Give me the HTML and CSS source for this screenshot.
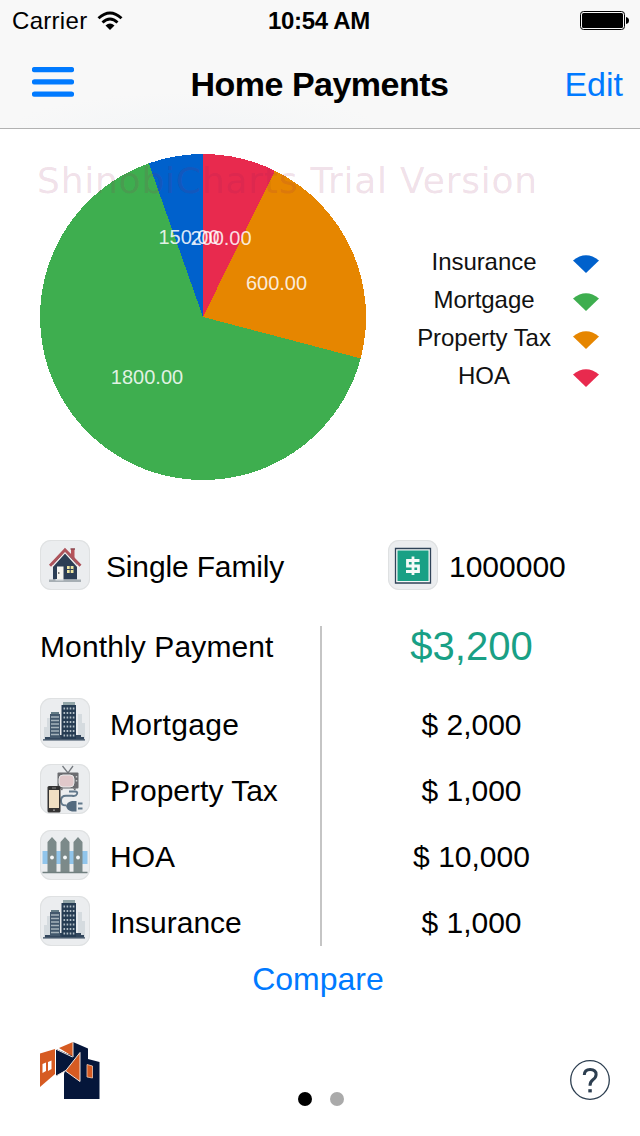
FILE: index.html
```html
<!DOCTYPE html>
<html lang="en">
<head>
<meta charset="utf-8">
<title>Home Payments</title>
<link rel="stylesheet" href="styles.css">
</head>
<body>
<svg width="0" height="0" class="defs">
  <defs>
    <g id="building">
      <path d="M4 41V29h3v-9h5v21zM38 41V16h4v9h3v16z" fill="#d5dbdf"/>
      <path d="M3 41.2h42v1.3H3z" fill="#33475d"/>
      <path d="M5 39h5v-2h12v-3h14v3h5v2h3v2.500H5z" fill="#33475d"/>
      <path d="M11 14h8v2h-8z" fill="#637b85"/>
      <path d="M10 16h10v24H10z" fill="#43586c"/>
      <path d="M11 19h8M11 22.500h8M11 26h8M11 29.500h8M11 33h8M11 36.500h8" stroke="#a5b2ba" stroke-width="1.4"/>
      <path d="M23 4h12v3H23z" fill="#92a5a8"/>
      <path d="M21.500 7h14.500v34H21.500z" fill="#263c53"/>
      <path d="M23.500 10.500h11M23.500 15h11M23.500 19.500h11M23.500 24h11M23.500 28.500h11M23.500 33h11M23.500 37.500h11" stroke="#b1bdc5" stroke-width="2" stroke-dasharray="1.6 1.5"/>
    </g>
  </defs>
</svg>
<div class="screen">
  <header class="header">
    <div class="status">
      <div class="carrier"><span>Carrier</span>
        <svg width="26" height="20" viewBox="0 0 26 20"><g fill="none" stroke="#000" stroke-width="2.900"><path d="M1.500 7.300Q13-3.200 24.500 7.300"/><path d="M5.500 11.500Q13 4.500 20.500 11.500"/></g><path d="M13 19l-4.500-4.500q4.500-4 9 0z"/></svg>
      </div>
      <div class="clock">10:54 AM</div>
      <div class="battery">
        <svg width="50" height="20" viewBox="0 0 50 20"><rect x=".5" y=".5" width="44" height="18" rx="3" fill="none" stroke="#000"/><rect x="2" y="2" width="41" height="15" rx="1.500"/><path d="M46 6q3 .5 3 3.500t-3 3.500z"/></svg>
      </div>
    </div>
    <nav class="nav">
      <svg class="menu" width="42" height="30" viewBox="0 0 42 30"><path d="M2.500 2.600h37M2.500 14.900h37M2.500 27.200h37" stroke="#007aff" stroke-width="5.300" stroke-linecap="round"/></svg>
      <h1 class="title">Home Payments</h1>
      <a class="edit">Edit</a>
    </nav>
  </header>

  <section class="chart">
    <svg class="pie" width="328" height="328" viewBox="39 153 328 328">
      <g shape-rendering="crispEdges">
        <path d="M203 317V154A163 163 0 0 1 274.900 170.700Z" fill="#e82a4e"/>
        <path d="M203 317L274.900 170.700A163 163 0 0 1 360.700 358.400Z" fill="#e68600"/>
        <path d="M203 317L360.700 358.400A163 163 0 1 1 148.800 163.300Z" fill="#3eae4f"/>
        <path d="M203 317L148.800 163.300A163 163 0 0 1 203 154Z" fill="#0061cc"/>
      </g>
      <g class="slice-label">
        <text x="189" y="244">150.00</text>
        <text x="221" y="245">200.00</text>
        <text x="276.500" y="290">600.00</text>
        <text x="147" y="384">1800.00</text>
      </g>
    </svg>
    <ul class="legend">
      <li><span>Insurance</span><svg width="26" height="18" viewBox="0 0 26 18"><path d="M0 5.500Q13-5 26 5.500L13 18z" fill="#0061cc"/></svg></li>
      <li><span>Mortgage</span><svg width="26" height="18" viewBox="0 0 26 18"><path d="M0 5.500Q13-5 26 5.500L13 18z" fill="#3eae4f"/></svg></li>
      <li><span>Property Tax</span><svg width="26" height="18" viewBox="0 0 26 18"><path d="M0 5.500Q13-5 26 5.500L13 18z" fill="#e68600"/></svg></li>
      <li><span>HOA</span><svg width="26" height="18" viewBox="0 0 26 18"><path d="M0 5.500Q13-5 26 5.500L13 18z" fill="#e82a4e"/></svg></li>
    </ul>
    <div class="watermark">ShinobiCharts Trial Version</div>
  </section>

  <section class="summary">
    <div class="type">
      <svg class="tile" viewBox="0 0 50 50">
        <path d="M13 24L25 11l12 13v15.500H13z" fill="#2c3e55"/>
        <path d="M31 9h3.500v12L31 17z" fill="#b65359"/>
        <path d="M11.500 27.500L25 12.500 38.500 27.500" fill="none" stroke="#f5eeee" stroke-width="1.400"/>
        <path d="M10 25.800L25 9.800 40.500 25.800" fill="none" stroke="#ad535b" stroke-width="2.800"/>
        <path d="M30.500 9H35" stroke="#8e4951" stroke-width="1.500"/>
        <path d="M17 26.500h6.500V39H17z" fill="#f7f5ef"/><circle cx="18.800" cy="33" r=".8" fill="#222"/>
        <path d="M27 26h6.500v7H27z" fill="#eee5a0"/><path d="M30.200 26v7M27 29.500h6.500" stroke="#2c3e55"/>
        <path d="M9 39.500h32v2.500H9z" fill="#a7afb4"/><path d="M15.500 39h8v1.500h-8z" fill="#dce0e2"/>
      </svg>
      <span>Single Family</span>
    </div>
    <div class="price">
      <svg class="tile" viewBox="0 0 50 50">
        <path d="M7.500 8.500h35v34.500h-35z" fill="#f4f8f7" stroke="#2f4358" stroke-width="1.300"/>
        <path d="M9.500 10.500h31v30.500h-31z" fill="#19a085"/>
        <path d="M31.500 20.500H19.500V26h11v5.500H18M25 16.500v18.500" fill="none" stroke="#f5faf8" stroke-width="2.800"/>
      </svg>
      <span>1000000</span>
    </div>
  </section>

  <section class="payments">
    <div class="names">
      <div class="total-label">Monthly Payment</div>
      <div class="item"><svg class="tile" viewBox="0 0 50 50"><use href="#building"/></svg><span class="mortgage">Mortgage</span></div>
      <div class="item">
        <svg class="tile" viewBox="0 0 50 50">
          <path d="M22.500 2l5.500 7L33 2" fill="none" stroke="#777b80" stroke-width="1.300"/>
          <rect x="17.500" y="8.500" width="21" height="16" rx="1" fill="#6b6c70"/>
          <rect x="19" y="11" width="15" height="12" rx="4" fill="#e0c8ca" stroke="#e9eaeb"/>
          <path d="M36.500 12v1.500M36.500 16v1.500" stroke="#c9cbcd" stroke-width="1.500"/>
          <path d="M20 24.500h3l-1 2zM33 24.500h3l-1 2z" fill="#56585b"/>
          <path d="M29 27.500h6q3 0 2 2.500t-5 1.800h-6q-5 0-5 5t5 4.500" fill="none" stroke="#61788b" stroke-width="1.900"/>
          <path d="M26 42q1-4 6-5h4.500v10.500H32q-5-1-6-5.500z" fill="#536a7e"/>
          <path d="M38 39.500h4.500M38 44.500h4.500" stroke="#61788b" stroke-width="1.800"/>
          <rect x="7.500" y="22" width="13" height="26.500" rx="1.500" fill="#343333"/>
          <path d="M9 26h10v18H9z" fill="#f0dfc3"/><path d="M12 24h4" stroke="#888"/><circle cx="14" cy="46.200" r=".9" fill="#999"/>
        </svg><span>Property Tax</span></div>
      <div class="item">
        <svg class="tile" viewBox="0 0 50 50">
          <path d="M2.500 21h45v13h-45z" fill="#91c5eb"/>
          <path d="M7.500 42V12l4.500-5 4.500 5v30zM20.500 42V12L25 7l4.500 5v30zM33.500 42V12L38 7l4.500 5v30z" fill="#7c8a8a"/>
          <path d="M2.500 42.500h45" stroke="#718080" stroke-width="1.500"/>
          <g fill="#f5f8f9"><circle cx="12" cy="27.500" r="1.900"/><circle cx="25" cy="27.500" r="1.900"/><circle cx="38" cy="27.500" r="1.900"/></g>
        </svg><span>HOA</span></div>
      <div class="item"><svg class="tile" viewBox="0 0 50 50"><use href="#building"/></svg><span>Insurance</span></div>
    </div>
    <div class="amounts">
      <div class="total">$3,200</div>
      <div class="amount">$ 2,000</div>
      <div class="amount">$ 1,000</div>
      <div class="amount">$ 10,000</div>
      <div class="amount">$ 1,000</div>
    </div>
  </section>

  <a class="compare">Compare</a>

  <footer class="footer">
    <svg class="logo" width="60" height="58" viewBox="40 1042 60 58">
      <path d="M73 1042l15 6.500v10.500l11.500 3v37H64v-25z" fill="#05163a"/>
      <path d="M40 1053.500l15-4.500v25l-15 13z" fill="#d65b22"/>
      <path d="M56 1049l16 7-15 20z" fill="#05163a"/>
      <path d="M56 1049l16 7-6 14-10 6z" fill="#05163a"/>
      <path d="M59 1048l14-6v14.500z" fill="#d65b22"/>
      <path d="M80 1052.500v29L65.500 1071z" fill="#d65b22"/>
      <path d="M55.500 1049l17 8M73 1042v15M56 1076l10-5.500M80 1052.500v29L65.500 1071z" fill="none" stroke="#eee4df" stroke-width="1"/>
      <path d="M42.500 1064l3.500-1.500v8.500l-3.500 2zM48 1062l3.500-1.500v8.500l-3.500 2z" fill="#fff"/>
      <path d="M87 1064.500l5.500 1.500v12l-5.500-1z" fill="#d65b22" stroke="#efc9b3" stroke-width=".8"/>
    </svg>
    <div class="dots"><i class="dot current"></i><i class="dot"></i></div>
    <svg class="help" width="40" height="40" viewBox="0 0 40 40"><circle cx="20" cy="20" r="19.300" fill="none" stroke="#2c3e50" stroke-width="1.300"/><path d="M14.300 15q.2-5.500 5.800-5.500 6 0 6 5 0 2.900-3.200 5.200-2.900 2.200-2.900 6" fill="none" stroke="#2c3e50" stroke-width="3"/><path d="M18.300 29.200h3.500v3.200h-3.500z" fill="#2c3e50"/></svg>
  </footer>
</div>
</body>
</html>
```
FILE: styles.css
```css
* { box-sizing: border-box; }
body {
  margin: 0;
  background: #fff;
  color: #000;
  font-family: "Liberation Sans", Arial, sans-serif;
  font-size: 30px;
}
svg { display: block; flex: none; }
.defs { position: absolute; }
.screen {
  width: 640px;
  height: 1136px;
  display: flex;
  flex-direction: column;
  overflow: hidden;
  white-space: nowrap;
}

.header {
  height: 129px;
  background: radial-gradient(ellipse 190px 40px at 195px 132px, #f3f5f7, #f8f8f8);
  border-bottom: 1px solid #b2b2b2;
}
.status {
  display: grid;
  grid-template-columns: 1fr auto 1fr;
  align-items: center;
  height: 41px;
  padding: 0 10px 0 12px;
  font-size: 24px;
}
.carrier { display: flex; align-items: center; gap: 10px; letter-spacing: 0.3px; }
.clock { margin-right: 4px; font-weight: bold; letter-spacing: -0.3px; }
.battery { justify-self: end; }
.nav {
  display: grid;
  grid-template-columns: 1fr auto 1fr;
  align-items: center;
  height: 87px;
  padding: 0 17px 0 32px;
}
.menu { margin-top: -5px; }
.title { margin: -2px 16px 0 0; font-size: 34px; line-height: 40px; letter-spacing: -0.5px; }
.edit { justify-self: end; font-size: 34px; color: #007aff; }

.chart {
  position: relative;
  height: 391px;
  display: flex;
  padding: 24px 41px 0 39px;
}
.slice-label { fill: rgba(255, 255, 255, 0.85); font-size: 20px; text-anchor: middle; }
.legend {
  list-style: none;
  margin: 90px 0 0 50px;
  padding: 0;
  flex: 1;
  font-size: 24px;
  color: #111;
}
.legend li { display: flex; align-items: center; height: 38px; }
.legend span { width: 134px; margin-right: 22px; display: flex; justify-content: center; letter-spacing: -0.05px; }
.legend svg { margin-top: 4px; }
.watermark {
  position: absolute;
  left: 37px;
  top: 31px;
  font: 36px/42px "DejaVu Sans", sans-serif;
  letter-spacing: 0.78px;
  color: rgba(150, 30, 90, 0.15);
}

.summary { display: flex; height: 94px; padding: 0 40px; align-items: center; }
.summary .tile { margin-top: -4px; }
.type { width: 348px; display: flex; align-items: center; gap: 16px; letter-spacing: -0.15px; }
.price { display: flex; align-items: center; gap: 11px; }
.tile {
  width: 50px;
  height: 50px;
  background: #ebedef;
  border-radius: 11px;
  box-shadow: inset 0 0 0 1px #dfe1e2;
}

.payments { display: flex; height: 332px; padding: 12px 0 0 40px; }
.names { width: 282px; height: 320px; border-right: 2px solid #c5c5c5; }
.total-label { height: 64px; padding-top: 4px; line-height: 34px; letter-spacing: 0.12px; }
.item { height: 66px; display: flex; align-items: center; gap: 20px; }
.item span { padding-top: 4px; }
.mortgage { letter-spacing: 0.3px; }
.amounts { width: 299px; text-align: center; }
.total { height: 64px; line-height: 41px; font-size: 40px; color: #19a085; }
.amount { height: 66px; line-height: 70px; }

.compare { height: 66px; line-height: 66px; text-align: center; font-size: 32px; color: #007aff; padding-right: 4px; }

.footer {
  display: grid;
  grid-template-columns: 60px 1fr 40px;
  height: 124px;
  padding: 30px 30px 0 40px;
}
.dots { display: flex; justify-content: center; gap: 18px; padding: 50px 28px 0 0; }
.dot { width: 14px; height: 14px; border-radius: 50%; background: #aaa; }
.dot.current { background: #000; }
.help { margin-top: 18px; }
```
